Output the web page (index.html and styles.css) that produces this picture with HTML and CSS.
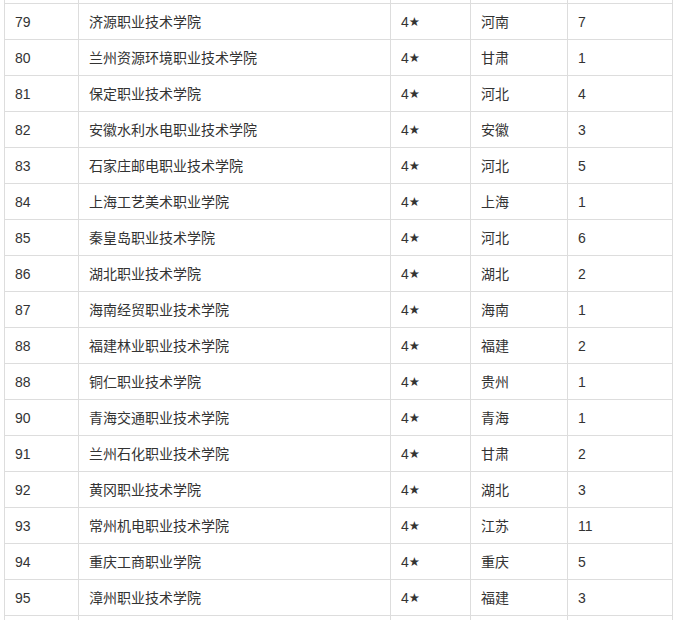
FILE: index.html
```html
<!DOCTYPE html>
<html lang="zh">
<head>
<meta charset="utf-8">
<link rel="stylesheet" href="styles.css">
</head>
<body>
<div class="wrap">
<table class="rank">
<colgroup>
<col class="c1"><col class="c2"><col class="c3"><col class="c4"><col class="c5">
</colgroup>
<tbody>
<tr class="stub"><td></td><td></td><td></td><td></td><td></td></tr>
<tr><td>79</td><td>济源职业技术学院</td><td>4<span class="star">★</span></td><td>河南</td><td>7</td></tr>
<tr><td>80</td><td>兰州资源环境职业技术学院</td><td>4<span class="star">★</span></td><td>甘肃</td><td>1</td></tr>
<tr><td>81</td><td>保定职业技术学院</td><td>4<span class="star">★</span></td><td>河北</td><td>4</td></tr>
<tr><td>82</td><td>安徽水利水电职业技术学院</td><td>4<span class="star">★</span></td><td>安徽</td><td>3</td></tr>
<tr><td>83</td><td>石家庄邮电职业技术学院</td><td>4<span class="star">★</span></td><td>河北</td><td>5</td></tr>
<tr><td>84</td><td>上海工艺美术职业学院</td><td>4<span class="star">★</span></td><td>上海</td><td>1</td></tr>
<tr><td>85</td><td>秦皇岛职业技术学院</td><td>4<span class="star">★</span></td><td>河北</td><td>6</td></tr>
<tr><td>86</td><td>湖北职业技术学院</td><td>4<span class="star">★</span></td><td>湖北</td><td>2</td></tr>
<tr><td>87</td><td>海南经贸职业技术学院</td><td>4<span class="star">★</span></td><td>海南</td><td>1</td></tr>
<tr><td>88</td><td>福建林业职业技术学院</td><td>4<span class="star">★</span></td><td>福建</td><td>2</td></tr>
<tr><td>88</td><td>铜仁职业技术学院</td><td>4<span class="star">★</span></td><td>贵州</td><td>1</td></tr>
<tr><td>90</td><td>青海交通职业技术学院</td><td>4<span class="star">★</span></td><td>青海</td><td>1</td></tr>
<tr><td>91</td><td>兰州石化职业技术学院</td><td>4<span class="star">★</span></td><td>甘肃</td><td>2</td></tr>
<tr><td>92</td><td>黄冈职业技术学院</td><td>4<span class="star">★</span></td><td>湖北</td><td>3</td></tr>
<tr><td>93</td><td>常州机电职业技术学院</td><td>4<span class="star">★</span></td><td>江苏</td><td>11</td></tr>
<tr><td>94</td><td>重庆工商职业学院</td><td>4<span class="star">★</span></td><td>重庆</td><td>5</td></tr>
<tr><td>95</td><td>漳州职业技术学院</td><td>4<span class="star">★</span></td><td>福建</td><td>3</td></tr>
<tr><td>&nbsp;</td><td></td><td></td><td></td><td></td></tr>
</tbody>
</table>
</div>
</body>
</html>
```

FILE: styles.css
```css
html, body {
  margin: 0;
  padding: 0;
  background: #fff;
}
.wrap {
  height: 620px;
  overflow: hidden;
  padding-left: 4px;
}
.rank {
  border-collapse: collapse;
  table-layout: fixed;
  width: 668px;
  font-family: "Liberation Sans", "Noto Sans CJK SC", sans-serif;
  font-size: 14px;
  color: #333;
}
.c1 { width: 74px; }
.c2 { width: 312px; }
.c3 { width: 80px; }
.c4 { width: 97px; }
.c5 { width: 105px; }
.rank td {
  border: 1px solid #ddd;
  padding: 0 10px;
  height: 35px;
  line-height: 20px;
  vertical-align: middle;
  white-space: nowrap;
}
.rank .stub td {
  border-top: none;
  height: 3px;
  line-height: 3px;
  padding: 0;
}
.star {
  font-family: "DejaVu Sans", sans-serif;
  font-size: 12.5px;
  vertical-align: 1px;
}
```
